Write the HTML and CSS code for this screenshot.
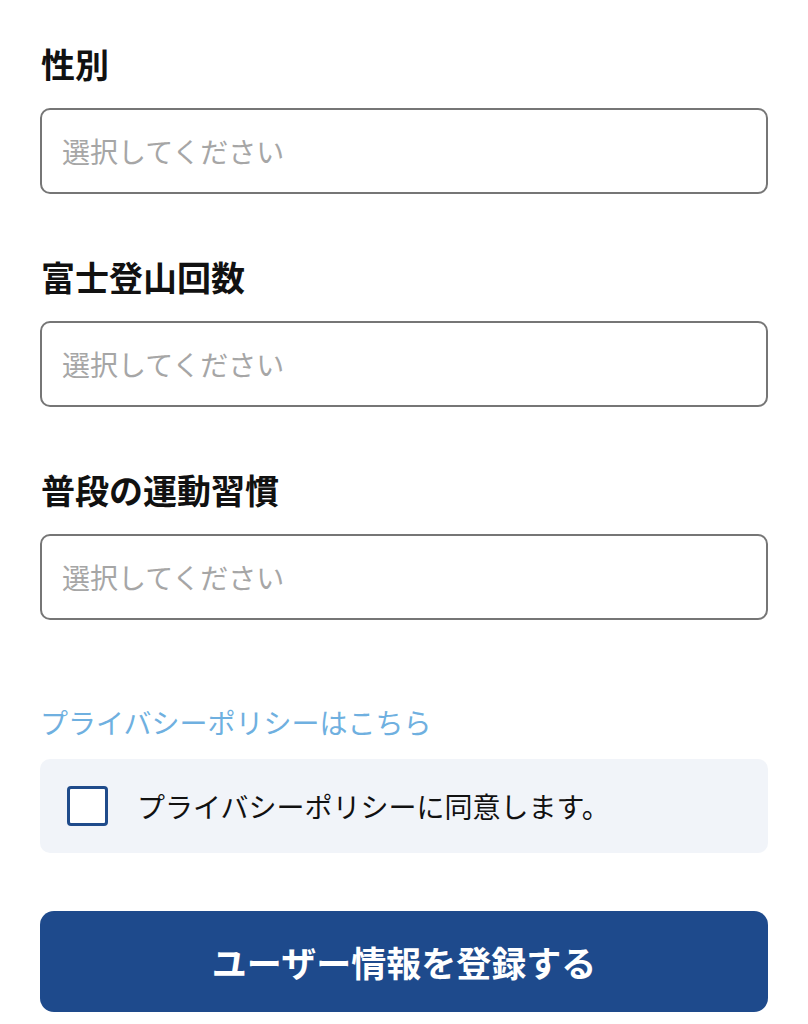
FILE: index.html
```html
<!DOCTYPE html>
<html lang="ja">
<head>
<meta charset="utf-8">
<title>ユーザー情報</title>
<link rel="stylesheet" href="styles.css">
</head>
<body>
<main class="form">
  <section class="field">
    <h2 class="label">性別</h2>
    <div class="select">選択してください</div>
  </section>
  <section class="field">
    <h2 class="label">富士登山回数</h2>
    <div class="select">選択してください</div>
  </section>
  <section class="field">
    <h2 class="label">普段の運動習慣</h2>
    <div class="select">選択してください</div>
  </section>
  <a class="policy-link" href="#">プライバシーポリシーはこちら</a>
  <div class="agree">
    <span class="checkbox"></span>
    <span class="agree-text">プライバシーポリシーに同意します。</span>
  </div>
  <button class="submit" type="button">ユーザー情報を登録する</button>
</main>
</body>
</html>
```

FILE: styles.css
```css
html, body {
  margin: 0;
  padding: 0;
  background: #ffffff;
}
body {
  font-family: "Noto Sans CJK JP", "Noto Sans", sans-serif;
  color: #111111;
}
.form {
  display: flex;
  flex-direction: column;
  padding: 44px 40px 0 40px;
}
.field {
  display: flex;
  flex-direction: column;
  gap: 24px;
  margin-bottom: 63px;
}
.label {
  margin: 0;
  font-size: 34px;
  line-height: 40px;
  font-weight: 700;
  color: #111111;
  padding-left: 1px;
}
.select {
  box-sizing: border-box;
  height: 86px;
  border: 2px solid #767676;
  border-radius: 10px;
  padding: 0 20px;
  display: flex;
  align-items: center;
  font-size: 28px;
  color: #a6a6a6;
}
.policy-link {
  margin-top: 21px;
  font-size: 28px;
  line-height: 36px;
  color: #6fb0e0;
  text-decoration: none;
}
.agree {
  margin-top: 19px;
  height: 94px;
  box-sizing: border-box;
  background: #f1f4f9;
  border-radius: 10px;
  display: flex;
  align-items: center;
  padding-left: 27px;
  gap: 29px;
}
.checkbox {
  box-sizing: border-box;
  width: 41px;
  height: 40px;
  border: 3.5px solid #1f4b8b;
  border-radius: 4px;
  background: #ffffff;
  flex: none;
}
.agree-text {
  font-size: 28px;
  color: #111111;
}
.submit {
  margin-top: 58px;
  height: 101px;
  border: none;
  border-radius: 14px;
  background: #1e4a8c;
  color: #ffffff;
  font-family: "Noto Sans CJK JP", "Noto Sans", sans-serif;
  font-size: 35px;
  font-weight: 700;
  display: flex;
  align-items: center;
  justify-content: center;
  padding: 0;
}
```
